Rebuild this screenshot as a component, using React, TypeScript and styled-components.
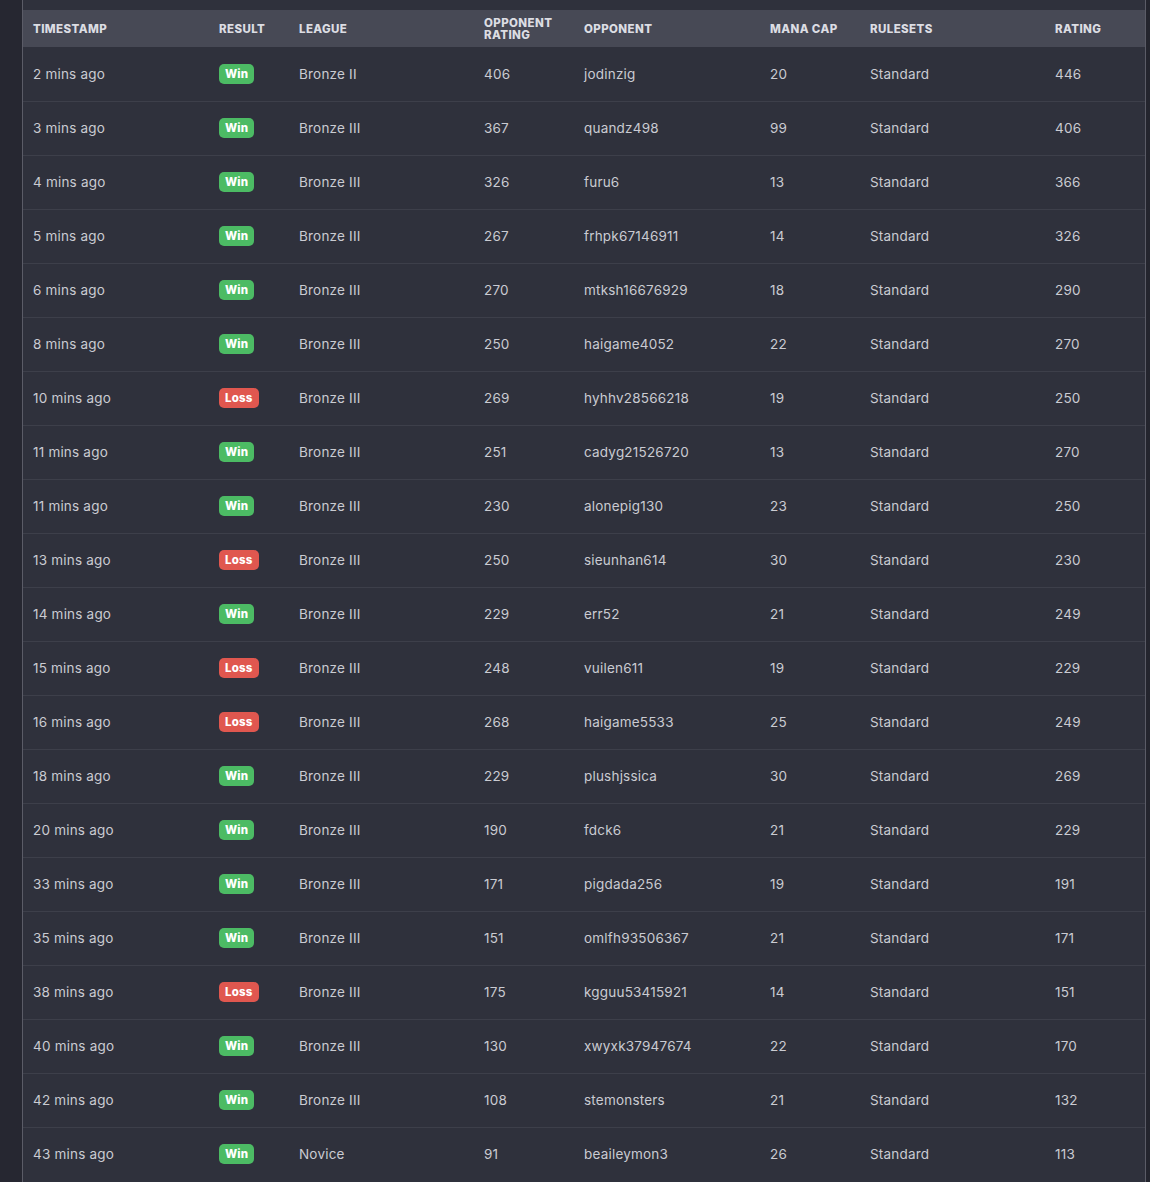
import React from 'react'
import styled, { createGlobalStyle } from 'styled-components'

const GlobalStyle = createGlobalStyle`
html, body {
  margin: 0;
  padding: 0;
  background: #24252e;
  font-family: Inter, "Noto Sans", sans-serif;
}
`

const Page = styled.div`
display: flex;
width: 1150px;
height: 1182px;
overflow: hidden;
background: #24252e;
`

const SideStrip = styled.div`
width: 22px;
flex-shrink: 0;
background: #262731;
`

const Panel = styled.div`
width: 1122px;
flex-shrink: 0;
background: #2f313c;
border-left: 1px solid #5b5c67;
border-right: 1px solid #5b5c67;
padding-top: 10px;
`

const Table = styled.table`
width: 1122px;
border-collapse: collapse;
table-layout: fixed;
`

const HeadRow = styled.tr`
background: #474955;
height: 37px;
`

const Th = styled.th<{ $w: number }>`
width: ${p => p.$w - 20}px;
text-align: left;
padding: 0 10px;
font-size: 11.5px;
font-weight: 800;
line-height: 12px;
letter-spacing: 0.4px;
color: #dcdde3;
text-transform: uppercase;
vertical-align: middle;
`

const Row = styled.tr`
height: 54px;
border-bottom: 1px solid #3d3f4a;
&:last-child {
  border-bottom: none;
}
`

const Td = styled.td`
padding: 0 10px;
font-size: 13.5px;
letter-spacing: 0.2px;
color: #cacbd2;
vertical-align: middle;
white-space: nowrap;
`

const Badge = styled.span<{ $win: boolean }>`
display: inline-block;
padding: 0 6px;
height: 20px;
line-height: 20px;
border-radius: 5px;
font-size: 11.5px;
font-weight: 800;
letter-spacing: 0.2px;
color: #ffffff;
background: ${p => (p.$win ? '#4cbb64' : '#e0574f')};
`

const columns: [string, number][] = [
  ['Timestamp', 186],
  ['Result', 80],
  ['League', 185],
  ['Opponent Rating', 100],
  ['Opponent', 186],
  ['Mana Cap', 100],
  ['Rulesets', 185],
  ['Rating', 100],
]

type Match = [string, boolean, string, number, string, number, number]

const matches: Match[] = [
  ['2 mins ago', true, 'Bronze II', 406, 'jodinzig', 20, 446],
  ['3 mins ago', true, 'Bronze III', 367, 'quandz498', 99, 406],
  ['4 mins ago', true, 'Bronze III', 326, 'furu6', 13, 366],
  ['5 mins ago', true, 'Bronze III', 267, 'frhpk67146911', 14, 326],
  ['6 mins ago', true, 'Bronze III', 270, 'mtksh16676929', 18, 290],
  ['8 mins ago', true, 'Bronze III', 250, 'haigame4052', 22, 270],
  ['10 mins ago', false, 'Bronze III', 269, 'hyhhv28566218', 19, 250],
  ['11 mins ago', true, 'Bronze III', 251, 'cadyg21526720', 13, 270],
  ['11 mins ago', true, 'Bronze III', 230, 'alonepig130', 23, 250],
  ['13 mins ago', false, 'Bronze III', 250, 'sieunhan614', 30, 230],
  ['14 mins ago', true, 'Bronze III', 229, 'err52', 21, 249],
  ['15 mins ago', false, 'Bronze III', 248, 'vuilen611', 19, 229],
  ['16 mins ago', false, 'Bronze III', 268, 'haigame5533', 25, 249],
  ['18 mins ago', true, 'Bronze III', 229, 'plushjssica', 30, 269],
  ['20 mins ago', true, 'Bronze III', 190, 'fdck6', 21, 229],
  ['33 mins ago', true, 'Bronze III', 171, 'pigdada256', 19, 191],
  ['35 mins ago', true, 'Bronze III', 151, 'omlfh93506367', 21, 171],
  ['38 mins ago', false, 'Bronze III', 175, 'kgguu53415921', 14, 151],
  ['40 mins ago', true, 'Bronze III', 130, 'xwyxk37947674', 22, 170],
  ['42 mins ago', true, 'Bronze III', 108, 'stemonsters', 21, 132],
  ['43 mins ago', true, 'Novice', 91, 'beaileymon3', 26, 113],
]

export default function App() {
  return (
    <>
      <GlobalStyle />
      <Page>
        <SideStrip />
        <Panel>
          <Table>
            <thead>
              <HeadRow>
                {columns.map(([label, w]) => (
                  <Th key={label} $w={w}>{label}</Th>
                ))}
              </HeadRow>
            </thead>
            <tbody>
              {matches.map((m, i) => (
                <Row key={i}>
                  <Td>{m[0]}</Td>
                  <Td><Badge $win={m[1]}>{m[1] ? 'Win' : 'Loss'}</Badge></Td>
                  <Td>{m[2]}</Td>
                  <Td>{m[3]}</Td>
                  <Td>{m[4]}</Td>
                  <Td>{m[5]}</Td>
                  <Td>Standard</Td>
                  <Td>{m[6]}</Td>
                </Row>
              ))}
            </tbody>
          </Table>
        </Panel>
      </Page>
    </>
  )
}
